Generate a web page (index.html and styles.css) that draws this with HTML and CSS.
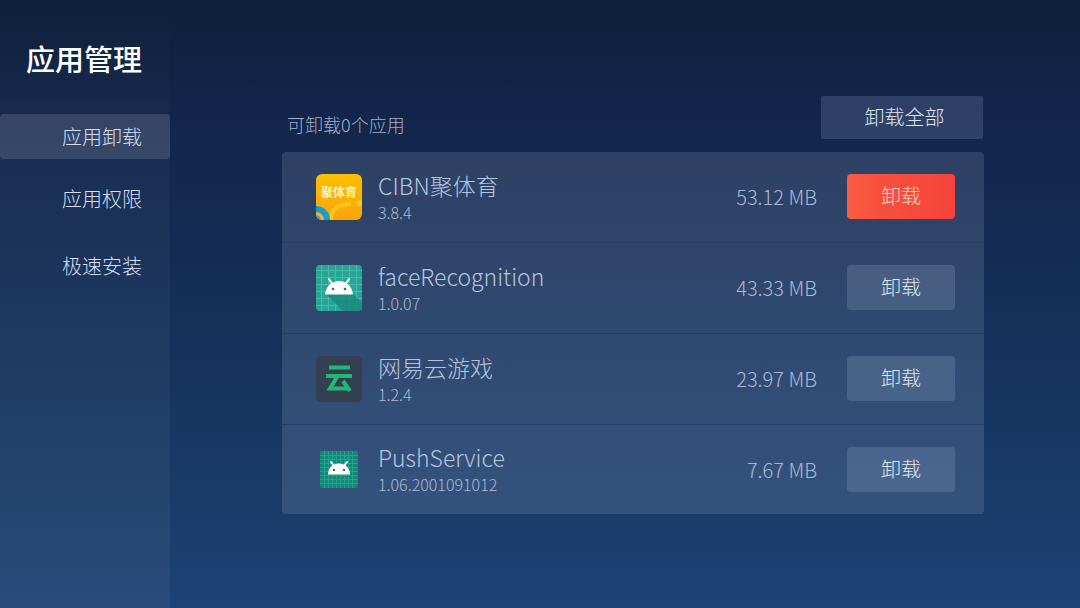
FILE: index.html
```html
<!DOCTYPE html>
<html lang="zh-CN">
<head>
  <meta charset="UTF-8" />
  <meta name="viewport" content="width=device-width, initial-scale=1.0" />
  <title>应用管理</title>
  <link rel="stylesheet" href="styles.css">
</head>
<body>
  <aside class="sidebar">
    <h1>应用管理</h1>
    <nav class="menu">
      <a class="menu-item active" href="#uninstall">应用卸载</a>
      <a class="menu-item" href="#permission">应用权限</a>
      <a class="menu-item" href="#install">极速安装</a>
    </nav>
  </aside>

  <main class="content">
    <div class="toolbar">
      <p class="count">可卸载0个应用</p>
      <button class="uninstall-all" type="button">卸载全部</button>
    </div>

    <ul class="app-list">
      <li class="app">
        <svg class="icon" viewBox="0 0 46 46" aria-hidden="true">
          <defs>
            <clipPath id="iconClip"><rect width="46" height="46" rx="6" /></clipPath>
            <linearGradient id="yellow" x1="0" y1="0" x2="0" y2="1">
              <stop offset="0" stop-color="#fcc000" />
              <stop offset="1" stop-color="#fba30c" />
            </linearGradient>
          </defs>
          <g clip-path="url(#iconClip)">
            <rect width="46" height="46" fill="url(#yellow)" />
            <path d="M15 46C15 35 22 30 35 30" fill="none" stroke="#fec81a" stroke-width="4" />
            <path d="M39 28l7-2v6h-4z" fill="#fec81a" />
            <circle cx="0" cy="46" r="11" fill="#f6ad3a" stroke="#129fd2" stroke-width="6" />
            <circle cx="-1" cy="47" r="6" fill="#4b9cb0" />
          </g>
          <text class="icon-text" x="23" y="23" text-anchor="middle">聚体育</text>
        </svg>
        <div class="info">
          <h2>CIBN聚体育</h2>
          <p>3.8.4</p>
        </div>
        <span class="size">53.12 MB</span>
        <button class="uninstall focus" type="button">卸载</button>
      </li>

      <li class="app">
        <svg class="icon" viewBox="0 0 46 46" aria-hidden="true">
          <rect width="46" height="46" rx="4" fill="#26a695" />
          <path d="M5.500 0v46M12.500 0v46M19.500 0v46M26.500 0v46M33.500 0v46M40.500 0v46M0 5.500h46M0 12.500h46M0 19.500h46M0 26.500h46M0 33.500h46M0 40.500h46" stroke="#74cbc0" stroke-width="1" opacity=".5" />
          <path d="M10 29L27 46H42Q46 46 46 42V38L36 28z" fill="#1c877c" opacity=".8" />
          <path d="M13 14l4 6M33 14l-4 6" stroke="#fff" stroke-width="2" stroke-linecap="round" />
          <path d="M9 29.500C10 21 16 16 23 16s13 5 14 13.500z" fill="#fff" />
          <circle cx="17" cy="24" r="1.300" fill="#466" />
          <circle cx="29" cy="24" r="1.300" fill="#466" />
        </svg>
        <div class="info">
          <h2>faceRecognition</h2>
          <p>1.0.07</p>
        </div>
        <span class="size">43.33 MB</span>
        <button class="uninstall" type="button">卸载</button>
      </li>

      <li class="app">
        <svg class="icon" viewBox="0 0 46 46" aria-hidden="true">
          <rect width="46" height="46" rx="5" fill="#32404f" />
          <path d="M13 11.500H34M10 20H36M21 21L14 32.500H32M27 25L34 35" fill="none" stroke="#20b873" stroke-width="4" />
        </svg>
        <div class="info">
          <h2>网易云游戏</h2>
          <p>1.2.4</p>
        </div>
        <span class="size">23.97 MB</span>
        <button class="uninstall" type="button">卸载</button>
      </li>

      <li class="app">
        <svg class="icon" viewBox="0 0 46 46" aria-hidden="true">
          <rect x="4" y="5" width="38" height="37" rx="2" fill="#0f8a78" />
          <path d="M8.500 5v37M12.500 5v37M16.500 5v37M20.500 5v37M24.500 5v37M28.500 5v37M32.500 5v37M36.500 5v37M4 9.500h38M4 13.500h38M4 17.500h38M4 21.500h38M4 25.500h38M4 29.500h38M4 33.500h38M4 37.500h38" stroke="#3fae9b" stroke-width="1" opacity=".6" />
          <path d="M15 16l3 4M31 16l-3 4" stroke="#fff" stroke-width="2" stroke-linecap="round" />
          <path d="M12 28.500C12.500 21 17 17.500 23 17.500s10.500 3.500 11 11z" fill="#fff" />
          <circle cx="18" cy="24" r="1.200" fill="#466" />
          <circle cx="28" cy="24" r="1.200" fill="#466" />
        </svg>
        <div class="info">
          <h2>PushService</h2>
          <p>1.06.2001091012</p>
        </div>
        <span class="size">7.67 MB</span>
        <button class="uninstall" type="button">卸载</button>
      </li>
    </ul>
  </main>
</body>
</html>
```
FILE: styles.css
```css
* {
  box-sizing: border-box;
}

body {
  margin: 0;
  min-height: 100vh;
  display: flex;
  background: linear-gradient(#0e2039 0%, #13254a 18%, #142d55 45%, #1a3a68 80%, #1d4275 100%);
  font-family: 'Noto Sans CJK SC', sans-serif;
  font-weight: 300;
  color: #dce6f5;
}

h1, h2, p, ul {
  margin: 0;
  padding: 0;
}

.sidebar {
  width: 170px;
  flex-shrink: 0;
  padding-top: 37px;
  background: linear-gradient(rgba(255, 255, 255, 0) 0%, rgba(255, 255, 255, 0.03) 30%, rgba(255, 255, 255, 0.05) 100%);
}

h1 {
  padding-right: 28px;
  text-align: right;
  font-size: 29px;
  line-height: 42px;
  font-weight: 500;
  color: #fff;
}

.menu {
  margin-top: 35px;
}

.menu-item {
  display: flex;
  align-items: center;
  justify-content: flex-end;
  height: 67px;
  padding-right: 28px;
  font-size: 20px;
  color: #d3dff5;
  text-decoration: none;
}

.menu-item.active {
  height: 45px;
  margin-bottom: 6px;
  border-radius: 4px;
  background: rgba(255, 255, 255, 0.13);
}

.content {
  flex: 1;
  padding: 96px 96px 40px 112px;
}

.toolbar {
  display: flex;
  justify-content: space-between;
  align-items: flex-start;
  height: 56px;
  padding: 0 1px 0 5px;
}

.count {
  margin-top: 15px;
  font-size: 18px;
  line-height: 26px;
  color: #9fb0cc;
}

button {
  padding: 0 0 2px;
  border: none;
  font-family: inherit;
  font-weight: 300;
  font-size: 20px;
  color: #dce6f5;
  cursor: pointer;
}

.uninstall-all {
  width: 162px;
  height: 43px;
  padding-left: 5px;
  border-radius: 2px;
  background: rgba(170, 190, 235, 0.18);
}

.app-list {
  list-style: none;
  border-radius: 4px;
  background: rgba(200, 215, 240, 0.15);
}

.app {
  display: flex;
  align-items: center;
  height: 91px;
  padding: 0 29px 1px 34px;
  border-bottom: 1px solid #253f66;
}

.app:last-child {
  height: 89px;
  border-bottom: none;
}

.icon {
  width: 46px;
  height: 46px;
  flex-shrink: 0;
}

.icon-text {
  font-size: 12px;
  font-weight: 700;
  fill: #fff3c4;
}

.info {
  flex: 1;
  margin-left: 16px;
}

.info h2 {
  font-size: 23px;
  line-height: 30px;
  font-weight: 300;
  color: #b5c5de;
}

.info p {
  font-size: 16px;
  line-height: 24px;
  color: #a9bad5;
}

.size {
  margin-right: 30px;
  font-size: 20px;
  color: #a9bad5;
}

.uninstall {
  width: 108px;
  height: 45px;
  border-radius: 4px;
  background: rgba(190, 215, 235, 0.17);
}

.uninstall.focus {
  background: linear-gradient(90deg, #fa5c42, #f6503c 30%, #f6443c);
  color: #fbd3cb;
}
```
